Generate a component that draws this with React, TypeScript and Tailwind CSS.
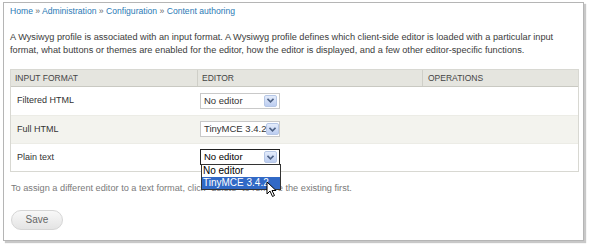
const rows = [
  { name: 'Filtered HTML', editor: 'No editor', bg: 'bg-white' },
  { name: 'Full HTML', editor: 'TinyMCE 3.4.2', bg: 'bg-[#f3f3ee]' },
  { name: 'Plain text', editor: 'No editor', bg: 'bg-white', open: true },
];

const Arrow = () => (
  <span className="flex h-[12px] w-[13px] shrink-0 items-center justify-center rounded-[2px] border border-[#b6c7e6] bg-gradient-to-b from-[#e4ecfb] to-[#bccdf0]">
    <svg width="7" height="5" viewBox="0 0 7 5">
      <path d="M0.5 0.8 L3.5 3.8 L6.5 0.8" fill="none" stroke="#4d6185" strokeWidth="1.6" />
    </svg>
  </span>
);

const Select = ({ value, open }: { value: string; open?: boolean }) => (
  <div className="relative">
    <div
      className={`flex h-[16px] w-[80px] items-center justify-between whitespace-nowrap pl-[3px] pr-[2px] text-[9.5px] ${
        open ? 'border border-[#222]' : 'border border-[#c9c9c9]'
      } bg-white text-[#333]`}
    >
      <span className={open ? 'text-black' : ''}>{value}</span>
      <Arrow />
    </div>
    {open && (
      <div className="absolute left-[1px] top-[15px] z-10 w-[80px] whitespace-nowrap border border-[#333] bg-white text-[10px] leading-[12px]">
        <div className="px-[1px] text-black">No editor</div>
        <div className="relative bg-[#3169c6] px-[1px] text-white">
          TinyMCE 3.4.2
          <svg className="absolute left-[64px] top-[4px]" width="12" height="17" viewBox="0 0 12 17">
            <path d="M1 1 L1 13 L4 10 L6.5 15.5 L8.5 14.5 L6 9.5 L10 9.5 Z" fill="#fff" stroke="#000" strokeWidth="1" />
          </svg>
        </div>
      </div>
    )}
  </div>
);

export default function App() {
  return (
    <div className="h-[247px] w-[589px] bg-white font-['Liberation_Sans',Arial,sans-serif]">
      <div className="ml-[3px] mt-[2px] h-[239px] w-[581px] border border-[#b5b5b5] shadow-[2px_2px_1px_#c8c8c8] px-[6px] pt-[2px]">
        <div className="text-[8.6px] text-[#2b7ab5]">
          Home <span className="text-[#666]">»</span> Administration <span className="text-[#666]">»</span> Configuration{' '}
          <span className="text-[#666]">»</span> Content authoring
        </div>
        <p className="mt-[13px] text-[9.2px] leading-[13px] text-[#3b3b3b]">
          A Wysiwyg profile is associated with an input format. A Wysiwyg profile defines which client-side editor is loaded with a particular input
          format, what buttons or themes are enabled for the editor, how the editor is displayed, and a few other editor-specific functions.
        </p>
        <div className="mt-[12px] w-[569px] border border-[#d8d8d2]">
          <div className="flex h-[17px] items-center border-b border-[#c9c9c2] bg-[#e5e5df] text-[8.5px] text-[#444]">
            <div className="w-[186px] pl-[4px]">INPUT FORMAT</div>
            <div className="h-full w-[225px] border-l border-[#cfcfc8] pl-[4px] leading-[17px]">EDITOR</div>
            <div className="h-full flex-1 border-l border-[#cfcfc8] pl-[5px] leading-[17px]">OPERATIONS</div>
          </div>
          {rows.map((row, i) => (
            <div key={i} className={`flex h-[28px] items-center ${row.bg} ${i > 0 ? 'border-t border-[#ececE6]' : ''}`}>
              <div className="w-[186px] pl-[6px] text-[9px] text-[#333]">{row.name}</div>
              <div className="pl-[3px]">
                <Select value={row.editor} open={row.open} />
              </div>
            </div>
          ))}
        </div>
        <p className="mt-[10px] pl-[1px] text-[9.2px] text-[#7a7a7a]">
          To assign a different editor to a text format, click "delete" to remove the existing first.
        </p>
        <button className="mt-[14px] ml-[1px] h-[20px] w-[52px] rounded-full border border-[#d6d6d6] bg-gradient-to-b from-[#f8f8f8] to-[#e4e4e4] text-[10px] text-[#666]">
          Save
        </button>
      </div>
    </div>
  );
}
